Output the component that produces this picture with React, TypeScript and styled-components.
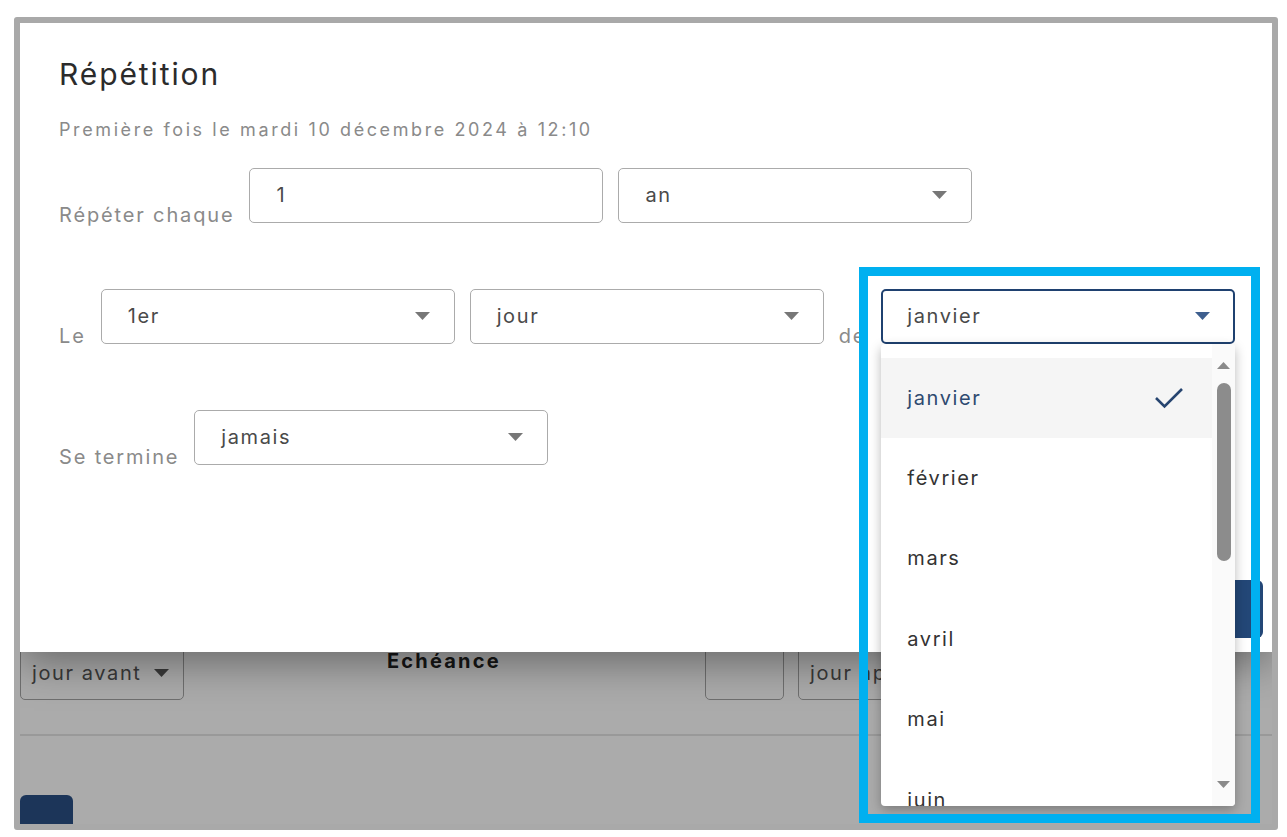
import styled, { createGlobalStyle } from "styled-components";

const GlobalStyle = createGlobalStyle`
  html, body {
    margin: 0;
    padding: 0;
    background: #ffffff;
  }
  body {
    font-family: Inter, "Noto Sans", sans-serif;
  }
  * {
    box-sizing: border-box;
  }
`;

const months = [
  "janvier",
  "février",
  "mars",
  "avril",
  "mai",
  "juin",
  "juillet",
  "août",
  "septembre",
  "octobre",
  "novembre",
  "décembre",
];

function Caret({ color = "#777777" }: { color?: string }) {
  return (
    <svg width="15" height="8" viewBox="0 0 15 8">
      <polygon points="0,0 15,0 7.5,8" fill={color} />
    </svg>
  );
}

function SmallArrow({ up }: { up?: boolean }) {
  return (
    <svg width="13" height="7" viewBox="0 0 13 7">
      <polygon points={up ? "0,7 13,7 6.5,0" : "0,0 13,0 6.5,7"} fill="#8a8a8a" />
    </svg>
  );
}

function Check() {
  return (
    <svg width="30" height="22" viewBox="0 0 30 22">
      <path d="M2 11 L10.5 19.5 L28 2" fill="none" stroke="#274570" strokeWidth="2.6" />
    </svg>
  );
}

function App() {
  return (
    <>
      <GlobalStyle />
      <S.Frame>
        <S.BehindPage>
          <S.BehindRow>
            <S.GhostSelect $width={164}>
              <span>jour avant</span>
              <Caret color="#555555" />
            </S.GhostSelect>
            <S.HeaderCell>Echéance</S.HeaderCell>
            <S.GhostBox />
            <S.GhostSelect $width={164} $gap={14}>
              <span>jour après</span>
              <Caret color="#555555" />
            </S.GhostSelect>
          </S.BehindRow>
          <S.HRule />
          <S.GhostButton />
        </S.BehindPage>

        <S.Backdrop />

        <S.Dialog>
          <S.Title>Répétition</S.Title>
          <S.Subtitle>Première fois le mardi 10 décembre 2024 à 12:10</S.Subtitle>

          <S.FormRow $top={26.5}>
            <S.FieldLabel>Répéter chaque</S.FieldLabel>
            <S.SelectBox>
              <span>1</span>
            </S.SelectBox>
            <S.SelectBox>
              <span>an</span>
              <Caret />
            </S.SelectBox>
          </S.FormRow>

          <S.FormRow $top={66}>
            <S.FieldLabel>Le</S.FieldLabel>
            <S.SelectBox>
              <span>1er</span>
              <Caret />
            </S.SelectBox>
            <S.SelectBox>
              <span>jour</span>
              <Caret />
            </S.SelectBox>
            <S.FieldLabel>de</S.FieldLabel>
            <S.SelectBox $focused>
              <span>janvier</span>
              <Caret color="#3e5f8e" />
              <S.Menu>
                <S.MenuList>
                  {months.map((m, i) => (
                    <S.MenuItem key={m} $selected={i === 0}>
                      <span>{m}</span>
                      {i === 0 && <Check />}
                    </S.MenuItem>
                  ))}
                </S.MenuList>
                <S.ScrollTrack>
                  <SmallArrow up />
                  <S.ScrollThumb />
                  <S.ScrollDown>
                    <SmallArrow />
                  </S.ScrollDown>
                </S.ScrollTrack>
              </S.Menu>
            </S.SelectBox>
          </S.FormRow>

          <S.FormRow $top={66}>
            <S.FieldLabel>Se termine</S.FieldLabel>
            <S.SelectBox>
              <span>jamais</span>
              <Caret />
            </S.SelectBox>
          </S.FormRow>

          <S.Footer>
            <S.PrimaryButton />
          </S.Footer>
        </S.Dialog>

        <S.Annotation />
      </S.Frame>
    </>
  );
}
export default App;

const Frame = styled.div`
  position: relative;
  margin: 17px 0 0 14px;
  width: 1264px;
  height: 813px;
  border: 6px solid #a9a9a9;
  border-radius: 3px;
  overflow: hidden;
  display: grid;
  grid-template: 1fr / 1fr;
  & > * {
    grid-area: 1 / 1;
  }
`;

const BehindPage = styled.div`
  background: #ffffff;
  padding-top: 617px;
  display: flex;
  flex-direction: column;
`;

const BehindRow = styled.div`
  display: flex;
  align-items: flex-start;
  height: 60px;
`;

const GhostSelect = styled.div<{ $width: number; $gap?: number }>`
  width: ${(p) => p.$width}px;
  height: 60px;
  margin-left: ${(p) => p.$gap ?? 0}px;
  flex-shrink: 0;
  border: 1px solid #a6a6a6;
  border-radius: 5px;
  padding: 6px 14px 0 11px;
  display: flex;
  align-items: center;
  justify-content: space-between;
  font-size: 20px;
  letter-spacing: 1.6px;
  white-space: nowrap;
  overflow: hidden;
  color: #555555;
`;

const HeaderCell = styled.div`
  width: 521px;
  flex-shrink: 0;
  padding-left: 203px;
  margin-top: 8.5px;
  font-size: 20px;
  line-height: 24px;
  font-weight: 700;
  letter-spacing: 2.2px;
  color: #222222;
`;

const GhostBox = styled.div`
  width: 79px;
  height: 60px;
  flex-shrink: 0;
  border: 1px solid #a6a6a6;
  border-radius: 5px;
`;

const HRule = styled.div`
  margin-top: 34px;
  height: 2px;
  background: #e5e5e5;
`;

const GhostButton = styled.div`
  margin-top: 59px;
  width: 53px;
  height: 40px;
  background: #2a5085;
  border-radius: 6px;
`;

const Backdrop = styled.div`
  background: rgba(0, 0, 0, 0.33);
`;

const Dialog = styled.div`
  position: relative;
  z-index: 1;
  align-self: start;
  height: 629px;
  background: #ffffff;
  box-shadow: 0 10px 40px rgba(0, 0, 0, 0.4);
  display: flex;
  flex-direction: column;
  padding: 34px 9px 14px 39px;
`;

const Title = styled.h2`
  margin: 0;
  font-size: 30px;
  line-height: 34px;
  font-weight: 400;
  letter-spacing: 1.9px;
  color: #2b2b2b;
`;

const Subtitle = styled.div`
  margin-top: 28px;
  font-size: 18px;
  line-height: 22px;
  letter-spacing: 2.6px;
  color: #8a8a8a;
`;

const FormRow = styled.div<{ $top: number }>`
  display: flex;
  align-items: flex-end;
  gap: 15px;
  margin-top: ${(p) => p.$top}px;
`;

const FieldLabel = styled.span`
  font-size: 20px;
  line-height: 20px;
  letter-spacing: 1.85px;
  color: #8a8a8a;
  margin-bottom: -2px;
`;

const SelectBox = styled.div<{ $focused?: boolean }>`
  position: relative;
  width: 354px;
  height: 55px;
  flex-shrink: 0;
  border: ${(p) => (p.$focused ? "2px solid #1f4170" : "1px solid #ababab")};
  border-radius: 5px;
  padding: 0 ${(p) => (p.$focused ? 23 : 24)}px 0 ${(p) => (p.$focused ? 24 : 26)}px;
  display: flex;
  align-items: center;
  justify-content: space-between;
  font-size: 20px;
  letter-spacing: 1.6px;
  color: #4a4a4a;
`;

const Menu = styled.div`
  position: absolute;
  top: calc(100% + 2px);
  left: -2px;
  width: 354px;
  height: 462px;
  background: #ffffff;
  border-radius: 4px;
  box-shadow: 0 4px 12px rgba(0, 0, 0, 0.28);
  overflow: hidden;
  z-index: 2;
`;

const MenuList = styled.div`
  margin-right: 23px;
  padding-top: 14px;
`;

const MenuItem = styled.div<{ $selected?: boolean }>`
  height: 80.4px;
  display: flex;
  align-items: center;
  justify-content: space-between;
  padding: 0 28px 0 26px;
  font-size: 20px;
  letter-spacing: 1.6px;
  color: ${(p) => (p.$selected ? "#2e4a70" : "#333333")};
  background: ${(p) => (p.$selected ? "#f5f5f5" : "transparent")};
`;

const ScrollTrack = styled.div`
  position: absolute;
  top: 0;
  right: 0;
  bottom: 0;
  width: 23px;
  background: #fafafa;
  display: flex;
  flex-direction: column;
  align-items: center;
  padding: 18.5px 0 17.5px;
`;

const ScrollThumb = styled.div`
  margin-top: 13.5px;
  width: 14px;
  height: 178px;
  border-radius: 7px;
  background: #8c8c8c;
`;

const ScrollDown = styled.div`
  margin-top: auto;
  display: flex;
`;

const Footer = styled.div`
  margin-top: auto;
  display: flex;
  justify-content: flex-end;
`;

const PrimaryButton = styled.div`
  width: 150px;
  height: 58px;
  background: #234777;
  border-radius: 6px;
`;

const Annotation = styled.div`
  position: absolute;
  left: 839px;
  top: 244px;
  width: 401px;
  height: 556px;
  border: 9px solid #00b0f0;
  pointer-events: none;
  z-index: 5;
`;

const S = {
  Frame,
  BehindPage,
  BehindRow,
  GhostSelect,
  HeaderCell,
  GhostBox,
  HRule,
  GhostButton,
  Backdrop,
  Dialog,
  Title,
  Subtitle,
  FormRow,
  FieldLabel,
  SelectBox,
  Menu,
  MenuList,
  MenuItem,
  ScrollTrack,
  ScrollThumb,
  ScrollDown,
  Footer,
  PrimaryButton,
  Annotation,
};
